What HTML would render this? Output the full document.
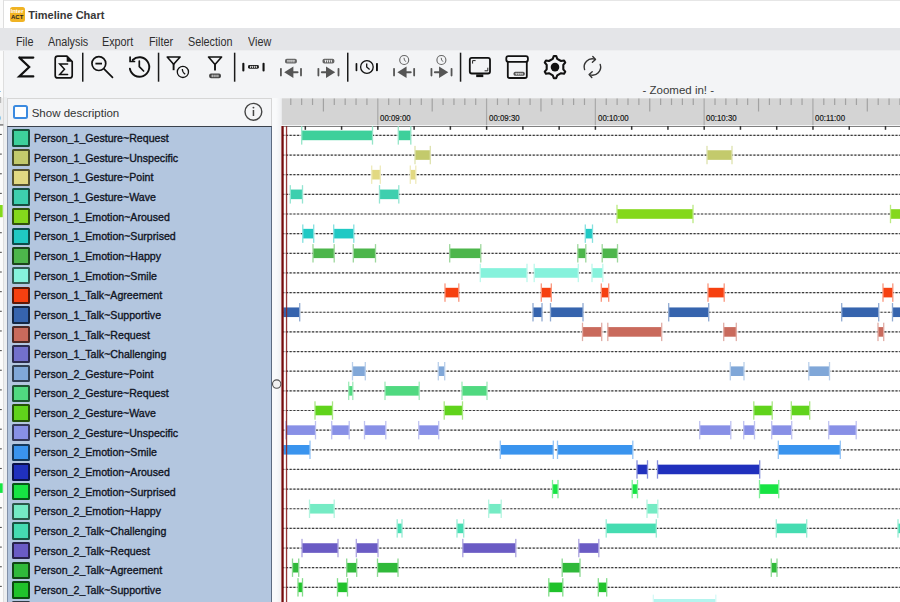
<!DOCTYPE html>
<html><head><meta charset="utf-8"><style>
html,body{margin:0;padding:0;}
body{width:900px;height:602px;overflow:hidden;position:relative;background:#f3f4f6;font-family:"Liberation Sans",sans-serif;}
.abs{position:absolute;}
.sw{position:absolute;left:11.5px;width:14px;height:13.4px;border:2px solid #333;border-radius:1.5px;}
.lb{position:absolute;left:34.3px;font-size:11.5px;line-height:14px;color:#10141f;-webkit-text-stroke:0.35px #10141f;white-space:nowrap;transform:scaleX(0.922);transform-origin:0 0;}
.rt{position:absolute;top:112.5px;font-size:9px;line-height:10px;color:#111;-webkit-text-stroke:0.15px #111;white-space:nowrap;transform:scaleX(0.875);transform-origin:0 0;}
.mi{position:absolute;top:34.7px;font-size:12px;line-height:14px;color:#2e2e2e;white-space:nowrap;transform:scaleX(0.9);transform-origin:0 0;}
</style></head><body>
<div class="abs" style="left:0;top:0;width:4px;height:602px;background:#fbfbfb"></div>
<div class="abs" style="left:3.3px;top:0;width:1px;height:602px;background:#dedede"></div>
<div class="abs" style="left:4.3px;top:97px;width:3px;height:505px;background:#eceef0"></div>
<div class="abs" style="left:4.3px;top:0;width:896px;height:28px;background:#ffffff"></div>
<div class="abs" style="left:4.3px;top:0;width:896px;height:1px;background:#e6e6e6"></div>
<div class="abs" style="left:4.3px;top:27.5px;width:896px;height:1.2px;background:#d5d7db"></div>
<div class="abs" style="left:0;top:28px;width:900px;height:22px;background:#e4e5e8"></div>
<div class="abs" style="left:0;top:49.6px;width:900px;height:1.3px;background:#eeeff1"></div>
<div class="abs" style="left:10px;top:7.3px;width:15.3px;height:14.3px;background:#f0b323;border-radius:2.5px;overflow:hidden">
  <div class="abs" style="left:0.5px;top:0.5px;font-size:6px;line-height:6px;font-weight:700;color:#fff">Inter</div>
  <div class="abs" style="left:1px;top:7px;font-size:6px;line-height:6px;font-weight:700;color:#222">ACT</div>
</div>
<div class="abs" style="left:28.2px;top:8.6px;font-size:11px;line-height:12px;font-weight:700;color:#383838;white-space:nowrap">Timeline Chart</div>
<div class="mi" style="left:16px">File</div>
<div class="mi" style="left:47.7px">Analysis</div>
<div class="mi" style="left:102px">Export</div>
<div class="mi" style="left:149px">Filter</div>
<div class="mi" style="left:188.3px">Selection</div>
<div class="mi" style="left:247.7px">View</div>
<!-- left panel header -->
<div class="abs" style="left:7.3px;top:98.3px;width:263px;height:27px;background:#f4f5f7;border:1px solid #d6d6d6;border-bottom:none"></div>
<div class="abs" style="left:13.3px;top:104.6px;width:10.6px;height:10.6px;border:2px solid #3b8ae0;border-radius:2.5px;background:#fff"></div>
<div class="abs" style="left:31.7px;top:105.5px;font-size:11.5px;line-height:14px;color:#333;white-space:nowrap">Show description</div>
<!-- list -->
<div class="abs" style="left:7.3px;top:125.5px;width:263px;height:480px;background:#b3c6df;border-left:1.2px solid #8190a8;border-right:1px solid #5d6b80;border-top:1.2px solid #3a414c"></div>
<div class="sw" style="top:129.30px;background:#3ed09b;border-color:#184f3b"></div><div class="lb" style="top:131.00px">Person_1_Gesture~Request</div><div class="sw" style="top:148.95px;background:#c3ca6c;border-color:#4a4d29"></div><div class="lb" style="top:150.65px">Person_1_Gesture~Unspecific</div><div class="sw" style="top:168.60px;background:#e2d982;border-color:#565231"></div><div class="lb" style="top:170.30px">Person_1_Gesture~Point</div><div class="sw" style="top:188.25px;background:#3dcfae;border-color:#174f42"></div><div class="lb" style="top:189.95px">Person_1_Gesture~Wave</div><div class="sw" style="top:207.90px;background:#84d81c;border-color:#32520b"></div><div class="lb" style="top:209.60px">Person_1_Emotion~Aroused</div><div class="sw" style="top:227.55px;background:#20c9c4;border-color:#0c4c4a"></div><div class="lb" style="top:229.25px">Person_1_Emotion~Surprised</div><div class="sw" style="top:247.20px;background:#4db64b;border-color:#1d451c"></div><div class="lb" style="top:248.90px">Person_1_Emotion~Happy</div><div class="sw" style="top:266.85px;background:#86f2dc;border-color:#335c54"></div><div class="lb" style="top:268.55px">Person_1_Emotion~Smile</div><div class="sw" style="top:286.50px;background:#f64010;border-color:#5d1806"></div><div class="lb" style="top:288.20px">Person_1_Talk~Agreement</div><div class="sw" style="top:306.15px;background:#3664ae;border-color:#152642"></div><div class="lb" style="top:307.85px">Person_1_Talk~Supportive</div><div class="sw" style="top:325.80px;background:#c96a5c;border-color:#4c2823"></div><div class="lb" style="top:327.50px">Person_1_Talk~Request</div><div class="sw" style="top:345.45px;background:#7370cc;border-color:#2c2b4e"></div><div class="lb" style="top:347.15px">Person_1_Talk~Challenging</div><div class="sw" style="top:365.10px;background:#80a7d8;border-color:#313f52"></div><div class="lb" style="top:366.80px">Person_2_Gesture~Point</div><div class="sw" style="top:384.75px;background:#50d980;border-color:#1e5231"></div><div class="lb" style="top:386.45px">Person_2_Gesture~Request</div><div class="sw" style="top:404.40px;background:#60d31b;border-color:#24500a"></div><div class="lb" style="top:406.10px">Person_2_Gesture~Wave</div><div class="sw" style="top:424.05px;background:#8890e6;border-color:#343757"></div><div class="lb" style="top:425.75px">Person_2_Gesture~Unspecific</div><div class="sw" style="top:443.70px;background:#3a94ee;border-color:#16385a"></div><div class="lb" style="top:445.40px">Person_2_Emotion~Smile</div><div class="sw" style="top:463.35px;background:#2030bd;border-color:#0c1248"></div><div class="lb" style="top:465.05px">Person_2_Emotion~Aroused</div><div class="sw" style="top:483.00px;background:#17e443;border-color:#095719"></div><div class="lb" style="top:484.70px">Person_2_Emotion~Surprised</div><div class="sw" style="top:502.65px;background:#75ebc4;border-color:#2c594a"></div><div class="lb" style="top:504.35px">Person_2_Emotion~Happy</div><div class="sw" style="top:522.30px;background:#45dcb1;border-color:#1a5443"></div><div class="lb" style="top:524.00px">Person_2_Talk~Challenging</div><div class="sw" style="top:541.95px;background:#6a5bc4;border-color:#28234a"></div><div class="lb" style="top:543.65px">Person_2_Talk~Request</div><div class="sw" style="top:561.60px;background:#30b93a;border-color:#124616"></div><div class="lb" style="top:563.30px">Person_2_Talk~Agreement</div><div class="sw" style="top:581.25px;background:#20c22b;border-color:#0c4a10"></div><div class="lb" style="top:582.95px">Person_2_Talk~Supportive</div><div class="sw" style="top:600.90px;background:#5f7f95;border-color:#2f3a44"></div>
<div class="abs" style="left:272.3px;top:98px;width:9px;height:504px;background:linear-gradient(90deg,#f9fafb 0%,#f9fafb 45%,#eff0f2 100%)"></div>
<svg class="abs" style="left:0;top:0" width="900" height="602" viewBox="0 0 900 602">
<defs><clipPath id="chartclip"><rect x="283.3" y="126" width="620" height="480"/></clipPath></defs>
<rect x="281.7" y="98.3" width="620" height="27" fill="#d4d4d4"/><rect x="290.18" y="98.5" width="1.2" height="6.5" fill="#a2a2a2"/><rect x="301.05" y="98.5" width="1.2" height="6.5" fill="#a2a2a2"/><rect x="311.93" y="98.5" width="1.2" height="6.5" fill="#a2a2a2"/><rect x="322.81" y="98.5" width="1.2" height="13" fill="#a2a2a2"/><rect x="333.69" y="98.5" width="1.2" height="6.5" fill="#a2a2a2"/><rect x="344.57" y="98.5" width="1.2" height="6.5" fill="#a2a2a2"/><rect x="355.44" y="98.5" width="1.2" height="6.5" fill="#a2a2a2"/><rect x="366.32" y="98.5" width="1.2" height="6.5" fill="#a2a2a2"/><rect x="377.20" y="98.5" width="1.2" height="27" fill="#a9a9a9"/><rect x="388.08" y="98.5" width="1.2" height="6.5" fill="#a2a2a2"/><rect x="398.96" y="98.5" width="1.2" height="6.5" fill="#a2a2a2"/><rect x="409.83" y="98.5" width="1.2" height="6.5" fill="#a2a2a2"/><rect x="420.71" y="98.5" width="1.2" height="6.5" fill="#a2a2a2"/><rect x="431.59" y="98.5" width="1.2" height="13" fill="#a2a2a2"/><rect x="442.47" y="98.5" width="1.2" height="6.5" fill="#a2a2a2"/><rect x="453.35" y="98.5" width="1.2" height="6.5" fill="#a2a2a2"/><rect x="464.22" y="98.5" width="1.2" height="6.5" fill="#a2a2a2"/><rect x="475.10" y="98.5" width="1.2" height="6.5" fill="#a2a2a2"/><rect x="485.98" y="98.5" width="1.2" height="27" fill="#a9a9a9"/><rect x="496.86" y="98.5" width="1.2" height="6.5" fill="#a2a2a2"/><rect x="507.74" y="98.5" width="1.2" height="6.5" fill="#a2a2a2"/><rect x="518.61" y="98.5" width="1.2" height="6.5" fill="#a2a2a2"/><rect x="529.49" y="98.5" width="1.2" height="6.5" fill="#a2a2a2"/><rect x="540.37" y="98.5" width="1.2" height="13" fill="#a2a2a2"/><rect x="551.25" y="98.5" width="1.2" height="6.5" fill="#a2a2a2"/><rect x="562.13" y="98.5" width="1.2" height="6.5" fill="#a2a2a2"/><rect x="573.00" y="98.5" width="1.2" height="6.5" fill="#a2a2a2"/><rect x="583.88" y="98.5" width="1.2" height="6.5" fill="#a2a2a2"/><rect x="594.76" y="98.5" width="1.2" height="27" fill="#a9a9a9"/><rect x="605.64" y="98.5" width="1.2" height="6.5" fill="#a2a2a2"/><rect x="616.52" y="98.5" width="1.2" height="6.5" fill="#a2a2a2"/><rect x="627.39" y="98.5" width="1.2" height="6.5" fill="#a2a2a2"/><rect x="638.27" y="98.5" width="1.2" height="6.5" fill="#a2a2a2"/><rect x="649.15" y="98.5" width="1.2" height="13" fill="#a2a2a2"/><rect x="660.03" y="98.5" width="1.2" height="6.5" fill="#a2a2a2"/><rect x="670.91" y="98.5" width="1.2" height="6.5" fill="#a2a2a2"/><rect x="681.78" y="98.5" width="1.2" height="6.5" fill="#a2a2a2"/><rect x="692.66" y="98.5" width="1.2" height="6.5" fill="#a2a2a2"/><rect x="703.54" y="98.5" width="1.2" height="27" fill="#a9a9a9"/><rect x="714.42" y="98.5" width="1.2" height="6.5" fill="#a2a2a2"/><rect x="725.30" y="98.5" width="1.2" height="6.5" fill="#a2a2a2"/><rect x="736.17" y="98.5" width="1.2" height="6.5" fill="#a2a2a2"/><rect x="747.05" y="98.5" width="1.2" height="6.5" fill="#a2a2a2"/><rect x="757.93" y="98.5" width="1.2" height="13" fill="#a2a2a2"/><rect x="768.81" y="98.5" width="1.2" height="6.5" fill="#a2a2a2"/><rect x="779.69" y="98.5" width="1.2" height="6.5" fill="#a2a2a2"/><rect x="790.56" y="98.5" width="1.2" height="6.5" fill="#a2a2a2"/><rect x="801.44" y="98.5" width="1.2" height="6.5" fill="#a2a2a2"/><rect x="812.32" y="98.5" width="1.2" height="27" fill="#a9a9a9"/><rect x="823.20" y="98.5" width="1.2" height="6.5" fill="#a2a2a2"/><rect x="834.08" y="98.5" width="1.2" height="6.5" fill="#a2a2a2"/><rect x="844.95" y="98.5" width="1.2" height="6.5" fill="#a2a2a2"/><rect x="855.83" y="98.5" width="1.2" height="6.5" fill="#a2a2a2"/><rect x="866.71" y="98.5" width="1.2" height="13" fill="#a2a2a2"/><rect x="877.59" y="98.5" width="1.2" height="6.5" fill="#a2a2a2"/><rect x="888.47" y="98.5" width="1.2" height="6.5" fill="#a2a2a2"/><rect x="899.34" y="98.5" width="1.2" height="6.5" fill="#a2a2a2"/><rect x="281.5" y="125.5" width="620" height="480" fill="#ffffff"/><g clip-path="url(#chartclip)"><rect x="281.7" y="125" width="620" height="1.7" fill="#4a4a4a"/><rect x="304.58" y="125.5" width="1.5" height="4.3" fill="#333"/><rect x="340.84" y="125.5" width="1.5" height="4.3" fill="#333"/><rect x="377.10" y="125.5" width="1.5" height="4.3" fill="#333"/><rect x="413.36" y="125.5" width="1.5" height="4.3" fill="#333"/><rect x="449.62" y="125.5" width="1.5" height="4.3" fill="#333"/><rect x="485.88" y="125.5" width="1.5" height="4.3" fill="#333"/><rect x="522.14" y="125.5" width="1.5" height="4.3" fill="#333"/><rect x="558.40" y="125.5" width="1.5" height="4.3" fill="#333"/><rect x="594.66" y="125.5" width="1.5" height="4.3" fill="#333"/><rect x="630.92" y="125.5" width="1.5" height="4.3" fill="#333"/><rect x="667.18" y="125.5" width="1.5" height="4.3" fill="#333"/><rect x="703.44" y="125.5" width="1.5" height="4.3" fill="#333"/><rect x="739.70" y="125.5" width="1.5" height="4.3" fill="#333"/><rect x="775.96" y="125.5" width="1.5" height="4.3" fill="#333"/><rect x="812.22" y="125.5" width="1.5" height="4.3" fill="#333"/><rect x="848.48" y="125.5" width="1.5" height="4.3" fill="#333"/><rect x="884.74" y="125.5" width="1.5" height="4.3" fill="#333"/><line x1="283" y1="135.40" x2="902" y2="135.40" stroke="#d4d4d4" stroke-width="1.1"/><line x1="282.12" y1="135.40" x2="902" y2="135.40" stroke="#3a3a3a" stroke-width="1.2" stroke-dasharray="2.1 1.64"/><line x1="283" y1="155.05" x2="902" y2="155.05" stroke="#d4d4d4" stroke-width="1.1"/><line x1="282.12" y1="155.05" x2="902" y2="155.05" stroke="#3a3a3a" stroke-width="1.2" stroke-dasharray="2.1 1.64"/><line x1="283" y1="174.70" x2="902" y2="174.70" stroke="#d4d4d4" stroke-width="1.1"/><line x1="282.12" y1="174.70" x2="902" y2="174.70" stroke="#3a3a3a" stroke-width="1.2" stroke-dasharray="2.1 1.64"/><line x1="283" y1="194.35" x2="902" y2="194.35" stroke="#d4d4d4" stroke-width="1.1"/><line x1="282.12" y1="194.35" x2="902" y2="194.35" stroke="#3a3a3a" stroke-width="1.2" stroke-dasharray="2.1 1.64"/><line x1="283" y1="214.00" x2="902" y2="214.00" stroke="#d4d4d4" stroke-width="1.1"/><line x1="282.12" y1="214.00" x2="902" y2="214.00" stroke="#3a3a3a" stroke-width="1.2" stroke-dasharray="2.1 1.64"/><line x1="283" y1="233.65" x2="902" y2="233.65" stroke="#d4d4d4" stroke-width="1.1"/><line x1="282.12" y1="233.65" x2="902" y2="233.65" stroke="#3a3a3a" stroke-width="1.2" stroke-dasharray="2.1 1.64"/><line x1="283" y1="253.30" x2="902" y2="253.30" stroke="#d4d4d4" stroke-width="1.1"/><line x1="282.12" y1="253.30" x2="902" y2="253.30" stroke="#3a3a3a" stroke-width="1.2" stroke-dasharray="2.1 1.64"/><line x1="283" y1="272.95" x2="902" y2="272.95" stroke="#d4d4d4" stroke-width="1.1"/><line x1="282.12" y1="272.95" x2="902" y2="272.95" stroke="#3a3a3a" stroke-width="1.2" stroke-dasharray="2.1 1.64"/><line x1="283" y1="292.60" x2="902" y2="292.60" stroke="#d4d4d4" stroke-width="1.1"/><line x1="282.12" y1="292.60" x2="902" y2="292.60" stroke="#3a3a3a" stroke-width="1.2" stroke-dasharray="2.1 1.64"/><line x1="283" y1="312.25" x2="902" y2="312.25" stroke="#d4d4d4" stroke-width="1.1"/><line x1="282.12" y1="312.25" x2="902" y2="312.25" stroke="#3a3a3a" stroke-width="1.2" stroke-dasharray="2.1 1.64"/><line x1="283" y1="331.90" x2="902" y2="331.90" stroke="#d4d4d4" stroke-width="1.1"/><line x1="282.12" y1="331.90" x2="902" y2="331.90" stroke="#3a3a3a" stroke-width="1.2" stroke-dasharray="2.1 1.64"/><line x1="283" y1="351.55" x2="902" y2="351.55" stroke="#d4d4d4" stroke-width="1.1"/><line x1="282.12" y1="351.55" x2="902" y2="351.55" stroke="#3a3a3a" stroke-width="1.2" stroke-dasharray="2.1 1.64"/><line x1="283" y1="371.20" x2="902" y2="371.20" stroke="#d4d4d4" stroke-width="1.1"/><line x1="282.12" y1="371.20" x2="902" y2="371.20" stroke="#3a3a3a" stroke-width="1.2" stroke-dasharray="2.1 1.64"/><line x1="283" y1="390.85" x2="902" y2="390.85" stroke="#d4d4d4" stroke-width="1.1"/><line x1="282.12" y1="390.85" x2="902" y2="390.85" stroke="#3a3a3a" stroke-width="1.2" stroke-dasharray="2.1 1.64"/><line x1="283" y1="410.50" x2="902" y2="410.50" stroke="#d4d4d4" stroke-width="1.1"/><line x1="282.12" y1="410.50" x2="902" y2="410.50" stroke="#3a3a3a" stroke-width="1.2" stroke-dasharray="2.1 1.64"/><line x1="283" y1="430.15" x2="902" y2="430.15" stroke="#d4d4d4" stroke-width="1.1"/><line x1="282.12" y1="430.15" x2="902" y2="430.15" stroke="#3a3a3a" stroke-width="1.2" stroke-dasharray="2.1 1.64"/><line x1="283" y1="449.80" x2="902" y2="449.80" stroke="#d4d4d4" stroke-width="1.1"/><line x1="282.12" y1="449.80" x2="902" y2="449.80" stroke="#3a3a3a" stroke-width="1.2" stroke-dasharray="2.1 1.64"/><line x1="283" y1="469.45" x2="902" y2="469.45" stroke="#d4d4d4" stroke-width="1.1"/><line x1="282.12" y1="469.45" x2="902" y2="469.45" stroke="#3a3a3a" stroke-width="1.2" stroke-dasharray="2.1 1.64"/><line x1="283" y1="489.10" x2="902" y2="489.10" stroke="#d4d4d4" stroke-width="1.1"/><line x1="282.12" y1="489.10" x2="902" y2="489.10" stroke="#3a3a3a" stroke-width="1.2" stroke-dasharray="2.1 1.64"/><line x1="283" y1="508.75" x2="902" y2="508.75" stroke="#d4d4d4" stroke-width="1.1"/><line x1="282.12" y1="508.75" x2="902" y2="508.75" stroke="#3a3a3a" stroke-width="1.2" stroke-dasharray="2.1 1.64"/><line x1="283" y1="528.40" x2="902" y2="528.40" stroke="#d4d4d4" stroke-width="1.1"/><line x1="282.12" y1="528.40" x2="902" y2="528.40" stroke="#3a3a3a" stroke-width="1.2" stroke-dasharray="2.1 1.64"/><line x1="283" y1="548.05" x2="902" y2="548.05" stroke="#d4d4d4" stroke-width="1.1"/><line x1="282.12" y1="548.05" x2="902" y2="548.05" stroke="#3a3a3a" stroke-width="1.2" stroke-dasharray="2.1 1.64"/><line x1="283" y1="567.70" x2="902" y2="567.70" stroke="#d4d4d4" stroke-width="1.1"/><line x1="282.12" y1="567.70" x2="902" y2="567.70" stroke="#3a3a3a" stroke-width="1.2" stroke-dasharray="2.1 1.64"/><line x1="283" y1="587.35" x2="902" y2="587.35" stroke="#d4d4d4" stroke-width="1.1"/><line x1="282.12" y1="587.35" x2="902" y2="587.35" stroke="#3a3a3a" stroke-width="1.2" stroke-dasharray="2.1 1.64"/><rect x="301.70" y="130.60" width="70.80" height="9.6" fill="#3ed09b"/><rect x="301.05" y="126.20" width="1.3" height="18.4" fill="#95e5c8"/><rect x="371.85" y="126.20" width="1.3" height="18.4" fill="#95e5c8"/><rect x="398.30" y="130.60" width="12.50" height="9.6" fill="#3ed09b"/><rect x="397.65" y="126.20" width="1.3" height="18.4" fill="#95e5c8"/><rect x="410.15" y="126.20" width="1.3" height="18.4" fill="#95e5c8"/><rect x="415.00" y="150.25" width="15.30" height="9.6" fill="#c3ca6c"/><rect x="414.35" y="145.85" width="1.3" height="18.4" fill="#dee2ae"/><rect x="429.65" y="145.85" width="1.3" height="18.4" fill="#dee2ae"/><rect x="707.00" y="150.25" width="25.00" height="9.6" fill="#c3ca6c"/><rect x="706.35" y="145.85" width="1.3" height="18.4" fill="#dee2ae"/><rect x="731.35" y="145.85" width="1.3" height="18.4" fill="#dee2ae"/><rect x="371.70" y="169.90" width="8.60" height="9.6" fill="#e2d982"/><rect x="371.05" y="165.50" width="1.3" height="18.4" fill="#efeaba"/><rect x="379.65" y="165.50" width="1.3" height="18.4" fill="#efeaba"/><rect x="410.30" y="169.90" width="5.50" height="9.6" fill="#e2d982"/><rect x="409.65" y="165.50" width="1.3" height="18.4" fill="#efeaba"/><rect x="415.15" y="165.50" width="1.3" height="18.4" fill="#efeaba"/><rect x="290.30" y="189.55" width="12.20" height="9.6" fill="#3dcfae"/><rect x="289.65" y="185.15" width="1.3" height="18.4" fill="#94e5d2"/><rect x="301.85" y="185.15" width="1.3" height="18.4" fill="#94e5d2"/><rect x="379.50" y="189.55" width="19.30" height="9.6" fill="#3dcfae"/><rect x="378.85" y="185.15" width="1.3" height="18.4" fill="#94e5d2"/><rect x="398.15" y="185.15" width="1.3" height="18.4" fill="#94e5d2"/><rect x="617.00" y="209.20" width="76.00" height="9.6" fill="#84d81c"/><rect x="616.35" y="204.80" width="1.3" height="18.4" fill="#bbea82"/><rect x="692.35" y="204.80" width="1.3" height="18.4" fill="#bbea82"/><rect x="890.50" y="209.20" width="21.50" height="9.6" fill="#84d81c"/><rect x="889.85" y="204.80" width="1.3" height="18.4" fill="#bbea82"/><rect x="911.35" y="204.80" width="1.3" height="18.4" fill="#bbea82"/><rect x="302.80" y="228.85" width="10.90" height="9.6" fill="#20c9c4"/><rect x="302.15" y="224.45" width="1.3" height="18.4" fill="#84e1df"/><rect x="313.05" y="224.45" width="1.3" height="18.4" fill="#84e1df"/><rect x="333.70" y="228.85" width="20.10" height="9.6" fill="#20c9c4"/><rect x="333.05" y="224.45" width="1.3" height="18.4" fill="#84e1df"/><rect x="353.15" y="224.45" width="1.3" height="18.4" fill="#84e1df"/><rect x="585.30" y="228.85" width="7.20" height="9.6" fill="#20c9c4"/><rect x="584.65" y="224.45" width="1.3" height="18.4" fill="#84e1df"/><rect x="591.85" y="224.45" width="1.3" height="18.4" fill="#84e1df"/><rect x="313.00" y="248.50" width="21.20" height="9.6" fill="#4db64b"/><rect x="312.35" y="244.10" width="1.3" height="18.4" fill="#9dd79c"/><rect x="333.55" y="244.10" width="1.3" height="18.4" fill="#9dd79c"/><rect x="353.30" y="248.50" width="22.20" height="9.6" fill="#4db64b"/><rect x="352.65" y="244.10" width="1.3" height="18.4" fill="#9dd79c"/><rect x="374.85" y="244.10" width="1.3" height="18.4" fill="#9dd79c"/><rect x="449.70" y="248.50" width="31.10" height="9.6" fill="#4db64b"/><rect x="449.05" y="244.10" width="1.3" height="18.4" fill="#9dd79c"/><rect x="480.15" y="244.10" width="1.3" height="18.4" fill="#9dd79c"/><rect x="577.80" y="248.50" width="8.00" height="9.6" fill="#4db64b"/><rect x="577.15" y="244.10" width="1.3" height="18.4" fill="#9dd79c"/><rect x="585.15" y="244.10" width="1.3" height="18.4" fill="#9dd79c"/><rect x="602.20" y="248.50" width="15.30" height="9.6" fill="#4db64b"/><rect x="601.55" y="244.10" width="1.3" height="18.4" fill="#9dd79c"/><rect x="616.85" y="244.10" width="1.3" height="18.4" fill="#9dd79c"/><rect x="480.30" y="268.15" width="46.70" height="9.6" fill="#86f2dc"/><rect x="479.65" y="263.75" width="1.3" height="18.4" fill="#bcf8ec"/><rect x="526.35" y="263.75" width="1.3" height="18.4" fill="#bcf8ec"/><rect x="534.20" y="268.15" width="44.10" height="9.6" fill="#86f2dc"/><rect x="533.55" y="263.75" width="1.3" height="18.4" fill="#bcf8ec"/><rect x="577.65" y="263.75" width="1.3" height="18.4" fill="#bcf8ec"/><rect x="592.00" y="268.15" width="10.80" height="9.6" fill="#86f2dc"/><rect x="591.35" y="263.75" width="1.3" height="18.4" fill="#bcf8ec"/><rect x="602.15" y="263.75" width="1.3" height="18.4" fill="#bcf8ec"/><rect x="445.00" y="287.80" width="13.80" height="9.6" fill="#f64010"/><rect x="444.35" y="283.40" width="1.3" height="18.4" fill="#fa967c"/><rect x="458.15" y="283.40" width="1.3" height="18.4" fill="#fa967c"/><rect x="541.30" y="287.80" width="10.00" height="9.6" fill="#f64010"/><rect x="540.65" y="283.40" width="1.3" height="18.4" fill="#fa967c"/><rect x="550.65" y="283.40" width="1.3" height="18.4" fill="#fa967c"/><rect x="601.30" y="287.80" width="7.40" height="9.6" fill="#f64010"/><rect x="600.65" y="283.40" width="1.3" height="18.4" fill="#fa967c"/><rect x="608.05" y="283.40" width="1.3" height="18.4" fill="#fa967c"/><rect x="708.00" y="287.80" width="16.20" height="9.6" fill="#f64010"/><rect x="707.35" y="283.40" width="1.3" height="18.4" fill="#fa967c"/><rect x="723.55" y="283.40" width="1.3" height="18.4" fill="#fa967c"/><rect x="883.00" y="287.80" width="9.80" height="9.6" fill="#f64010"/><rect x="882.35" y="283.40" width="1.3" height="18.4" fill="#fa967c"/><rect x="892.15" y="283.40" width="1.3" height="18.4" fill="#fa967c"/><rect x="270.00" y="307.45" width="29.70" height="9.6" fill="#3664ae"/><rect x="269.35" y="303.05" width="1.3" height="18.4" fill="#90aad2"/><rect x="299.05" y="303.05" width="1.3" height="18.4" fill="#90aad2"/><rect x="533.00" y="307.45" width="9.00" height="9.6" fill="#3664ae"/><rect x="532.35" y="303.05" width="1.3" height="18.4" fill="#90aad2"/><rect x="541.35" y="303.05" width="1.3" height="18.4" fill="#90aad2"/><rect x="550.50" y="307.45" width="32.50" height="9.6" fill="#3664ae"/><rect x="549.85" y="303.05" width="1.3" height="18.4" fill="#90aad2"/><rect x="582.35" y="303.05" width="1.3" height="18.4" fill="#90aad2"/><rect x="668.70" y="307.45" width="40.00" height="9.6" fill="#3664ae"/><rect x="668.05" y="303.05" width="1.3" height="18.4" fill="#90aad2"/><rect x="708.05" y="303.05" width="1.3" height="18.4" fill="#90aad2"/><rect x="841.70" y="307.45" width="37.00" height="9.6" fill="#3664ae"/><rect x="841.05" y="303.05" width="1.3" height="18.4" fill="#90aad2"/><rect x="878.05" y="303.05" width="1.3" height="18.4" fill="#90aad2"/><rect x="892.50" y="307.45" width="19.50" height="9.6" fill="#3664ae"/><rect x="891.85" y="303.05" width="1.3" height="18.4" fill="#90aad2"/><rect x="911.35" y="303.05" width="1.3" height="18.4" fill="#90aad2"/><rect x="582.50" y="327.10" width="19.20" height="9.6" fill="#c96a5c"/><rect x="581.85" y="322.70" width="1.3" height="18.4" fill="#e1ada5"/><rect x="601.05" y="322.70" width="1.3" height="18.4" fill="#e1ada5"/><rect x="607.80" y="327.10" width="53.90" height="9.6" fill="#c96a5c"/><rect x="607.15" y="322.70" width="1.3" height="18.4" fill="#e1ada5"/><rect x="661.05" y="322.70" width="1.3" height="18.4" fill="#e1ada5"/><rect x="723.70" y="327.10" width="12.60" height="9.6" fill="#c96a5c"/><rect x="723.05" y="322.70" width="1.3" height="18.4" fill="#e1ada5"/><rect x="735.65" y="322.70" width="1.3" height="18.4" fill="#e1ada5"/><rect x="878.00" y="327.10" width="5.70" height="9.6" fill="#c96a5c"/><rect x="877.35" y="322.70" width="1.3" height="18.4" fill="#e1ada5"/><rect x="883.05" y="322.70" width="1.3" height="18.4" fill="#e1ada5"/><rect x="352.50" y="366.40" width="12.80" height="9.6" fill="#80a7d8"/><rect x="351.85" y="362.00" width="1.3" height="18.4" fill="#b9cfea"/><rect x="364.65" y="362.00" width="1.3" height="18.4" fill="#b9cfea"/><rect x="438.30" y="366.40" width="6.40" height="9.6" fill="#80a7d8"/><rect x="437.65" y="362.00" width="1.3" height="18.4" fill="#b9cfea"/><rect x="444.05" y="362.00" width="1.3" height="18.4" fill="#b9cfea"/><rect x="730.30" y="366.40" width="13.70" height="9.6" fill="#80a7d8"/><rect x="729.65" y="362.00" width="1.3" height="18.4" fill="#b9cfea"/><rect x="743.35" y="362.00" width="1.3" height="18.4" fill="#b9cfea"/><rect x="808.80" y="366.40" width="20.70" height="9.6" fill="#80a7d8"/><rect x="808.15" y="362.00" width="1.3" height="18.4" fill="#b9cfea"/><rect x="828.85" y="362.00" width="1.3" height="18.4" fill="#b9cfea"/><rect x="348.70" y="386.05" width="4.10" height="9.6" fill="#50d980"/><rect x="348.05" y="381.65" width="1.3" height="18.4" fill="#9feab9"/><rect x="352.15" y="381.65" width="1.3" height="18.4" fill="#9feab9"/><rect x="385.00" y="386.05" width="34.20" height="9.6" fill="#50d980"/><rect x="384.35" y="381.65" width="1.3" height="18.4" fill="#9feab9"/><rect x="418.55" y="381.65" width="1.3" height="18.4" fill="#9feab9"/><rect x="462.00" y="386.05" width="25.00" height="9.6" fill="#50d980"/><rect x="461.35" y="381.65" width="1.3" height="18.4" fill="#9feab9"/><rect x="486.35" y="381.65" width="1.3" height="18.4" fill="#9feab9"/><rect x="315.00" y="405.70" width="17.50" height="9.6" fill="#60d31b"/><rect x="314.35" y="401.30" width="1.3" height="18.4" fill="#a8e782"/><rect x="331.85" y="401.30" width="1.3" height="18.4" fill="#a8e782"/><rect x="444.20" y="405.70" width="18.30" height="9.6" fill="#60d31b"/><rect x="443.55" y="401.30" width="1.3" height="18.4" fill="#a8e782"/><rect x="461.85" y="401.30" width="1.3" height="18.4" fill="#a8e782"/><rect x="753.80" y="405.70" width="18.40" height="9.6" fill="#60d31b"/><rect x="753.15" y="401.30" width="1.3" height="18.4" fill="#a8e782"/><rect x="771.55" y="401.30" width="1.3" height="18.4" fill="#a8e782"/><rect x="791.30" y="405.70" width="18.40" height="9.6" fill="#60d31b"/><rect x="790.65" y="401.30" width="1.3" height="18.4" fill="#a8e782"/><rect x="809.05" y="401.30" width="1.3" height="18.4" fill="#a8e782"/><rect x="285.80" y="425.35" width="29.70" height="9.6" fill="#8890e6"/><rect x="285.15" y="420.95" width="1.3" height="18.4" fill="#bec2f1"/><rect x="314.85" y="420.95" width="1.3" height="18.4" fill="#bec2f1"/><rect x="331.70" y="425.35" width="17.50" height="9.6" fill="#8890e6"/><rect x="331.05" y="420.95" width="1.3" height="18.4" fill="#bec2f1"/><rect x="348.55" y="420.95" width="1.3" height="18.4" fill="#bec2f1"/><rect x="364.50" y="425.35" width="21.30" height="9.6" fill="#8890e6"/><rect x="363.85" y="420.95" width="1.3" height="18.4" fill="#bec2f1"/><rect x="385.15" y="420.95" width="1.3" height="18.4" fill="#bec2f1"/><rect x="418.70" y="425.35" width="20.00" height="9.6" fill="#8890e6"/><rect x="418.05" y="420.95" width="1.3" height="18.4" fill="#bec2f1"/><rect x="438.05" y="420.95" width="1.3" height="18.4" fill="#bec2f1"/><rect x="699.70" y="425.35" width="31.10" height="9.6" fill="#8890e6"/><rect x="699.05" y="420.95" width="1.3" height="18.4" fill="#bec2f1"/><rect x="730.15" y="420.95" width="1.3" height="18.4" fill="#bec2f1"/><rect x="743.70" y="425.35" width="10.80" height="9.6" fill="#8890e6"/><rect x="743.05" y="420.95" width="1.3" height="18.4" fill="#bec2f1"/><rect x="753.85" y="420.95" width="1.3" height="18.4" fill="#bec2f1"/><rect x="771.70" y="425.35" width="20.00" height="9.6" fill="#8890e6"/><rect x="771.05" y="420.95" width="1.3" height="18.4" fill="#bec2f1"/><rect x="791.05" y="420.95" width="1.3" height="18.4" fill="#bec2f1"/><rect x="828.70" y="425.35" width="27.50" height="9.6" fill="#8890e6"/><rect x="828.05" y="420.95" width="1.3" height="18.4" fill="#bec2f1"/><rect x="855.55" y="420.95" width="1.3" height="18.4" fill="#bec2f1"/><rect x="270.00" y="445.00" width="40.00" height="9.6" fill="#3a94ee"/><rect x="269.35" y="440.60" width="1.3" height="18.4" fill="#93c4f6"/><rect x="309.35" y="440.60" width="1.3" height="18.4" fill="#93c4f6"/><rect x="500.30" y="445.00" width="53.00" height="9.6" fill="#3a94ee"/><rect x="499.65" y="440.60" width="1.3" height="18.4" fill="#93c4f6"/><rect x="552.65" y="440.60" width="1.3" height="18.4" fill="#93c4f6"/><rect x="557.50" y="445.00" width="75.30" height="9.6" fill="#3a94ee"/><rect x="556.85" y="440.60" width="1.3" height="18.4" fill="#93c4f6"/><rect x="632.15" y="440.60" width="1.3" height="18.4" fill="#93c4f6"/><rect x="778.30" y="445.00" width="62.00" height="9.6" fill="#3a94ee"/><rect x="777.65" y="440.60" width="1.3" height="18.4" fill="#93c4f6"/><rect x="839.65" y="440.60" width="1.3" height="18.4" fill="#93c4f6"/><rect x="637.00" y="464.65" width="10.50" height="9.6" fill="#2030bd"/><rect x="636.35" y="460.25" width="1.3" height="18.4" fill="#848ddb"/><rect x="646.85" y="460.25" width="1.3" height="18.4" fill="#848ddb"/><rect x="657.50" y="464.65" width="102.20" height="9.6" fill="#2030bd"/><rect x="656.85" y="460.25" width="1.3" height="18.4" fill="#848ddb"/><rect x="759.05" y="460.25" width="1.3" height="18.4" fill="#848ddb"/><rect x="552.50" y="484.30" width="5.50" height="9.6" fill="#17e443"/><rect x="551.85" y="479.90" width="1.3" height="18.4" fill="#7ff098"/><rect x="557.35" y="479.90" width="1.3" height="18.4" fill="#7ff098"/><rect x="632.20" y="484.30" width="5.30" height="9.6" fill="#17e443"/><rect x="631.55" y="479.90" width="1.3" height="18.4" fill="#7ff098"/><rect x="636.85" y="479.90" width="1.3" height="18.4" fill="#7ff098"/><rect x="759.50" y="484.30" width="19.20" height="9.6" fill="#17e443"/><rect x="758.85" y="479.90" width="1.3" height="18.4" fill="#7ff098"/><rect x="778.05" y="479.90" width="1.3" height="18.4" fill="#7ff098"/><rect x="309.50" y="503.95" width="24.70" height="9.6" fill="#75ebc4"/><rect x="308.85" y="499.55" width="1.3" height="18.4" fill="#b3f4df"/><rect x="333.55" y="499.55" width="1.3" height="18.4" fill="#b3f4df"/><rect x="488.70" y="503.95" width="12.50" height="9.6" fill="#75ebc4"/><rect x="488.05" y="499.55" width="1.3" height="18.4" fill="#b3f4df"/><rect x="500.55" y="499.55" width="1.3" height="18.4" fill="#b3f4df"/><rect x="647.00" y="503.95" width="10.80" height="9.6" fill="#75ebc4"/><rect x="646.35" y="499.55" width="1.3" height="18.4" fill="#b3f4df"/><rect x="657.15" y="499.55" width="1.3" height="18.4" fill="#b3f4df"/><rect x="397.20" y="523.60" width="4.80" height="9.6" fill="#45dcb1"/><rect x="396.55" y="519.20" width="1.3" height="18.4" fill="#99ecd4"/><rect x="401.35" y="519.20" width="1.3" height="18.4" fill="#99ecd4"/><rect x="457.00" y="523.60" width="6.70" height="9.6" fill="#45dcb1"/><rect x="456.35" y="519.20" width="1.3" height="18.4" fill="#99ecd4"/><rect x="463.05" y="519.20" width="1.3" height="18.4" fill="#99ecd4"/><rect x="606.20" y="523.60" width="50.10" height="9.6" fill="#45dcb1"/><rect x="605.55" y="519.20" width="1.3" height="18.4" fill="#99ecd4"/><rect x="655.65" y="519.20" width="1.3" height="18.4" fill="#99ecd4"/><rect x="776.30" y="523.60" width="30.40" height="9.6" fill="#45dcb1"/><rect x="775.65" y="519.20" width="1.3" height="18.4" fill="#99ecd4"/><rect x="806.05" y="519.20" width="1.3" height="18.4" fill="#99ecd4"/><rect x="898.00" y="523.60" width="14.00" height="9.6" fill="#45dcb1"/><rect x="897.35" y="519.20" width="1.3" height="18.4" fill="#99ecd4"/><rect x="911.35" y="519.20" width="1.3" height="18.4" fill="#99ecd4"/><rect x="302.00" y="543.25" width="36.00" height="9.6" fill="#6a5bc4"/><rect x="301.35" y="538.85" width="1.3" height="18.4" fill="#ada5df"/><rect x="337.35" y="538.85" width="1.3" height="18.4" fill="#ada5df"/><rect x="356.30" y="543.25" width="21.70" height="9.6" fill="#6a5bc4"/><rect x="355.65" y="538.85" width="1.3" height="18.4" fill="#ada5df"/><rect x="377.35" y="538.85" width="1.3" height="18.4" fill="#ada5df"/><rect x="462.80" y="543.25" width="53.00" height="9.6" fill="#6a5bc4"/><rect x="462.15" y="538.85" width="1.3" height="18.4" fill="#ada5df"/><rect x="515.15" y="538.85" width="1.3" height="18.4" fill="#ada5df"/><rect x="578.80" y="543.25" width="20.00" height="9.6" fill="#6a5bc4"/><rect x="578.15" y="538.85" width="1.3" height="18.4" fill="#ada5df"/><rect x="598.15" y="538.85" width="1.3" height="18.4" fill="#ada5df"/><rect x="292.50" y="562.90" width="6.20" height="9.6" fill="#30b93a"/><rect x="291.85" y="558.50" width="1.3" height="18.4" fill="#8dd893"/><rect x="298.05" y="558.50" width="1.3" height="18.4" fill="#8dd893"/><rect x="346.70" y="562.90" width="10.00" height="9.6" fill="#30b93a"/><rect x="346.05" y="558.50" width="1.3" height="18.4" fill="#8dd893"/><rect x="356.05" y="558.50" width="1.3" height="18.4" fill="#8dd893"/><rect x="377.50" y="562.90" width="20.50" height="9.6" fill="#30b93a"/><rect x="376.85" y="558.50" width="1.3" height="18.4" fill="#8dd893"/><rect x="397.35" y="558.50" width="1.3" height="18.4" fill="#8dd893"/><rect x="562.20" y="562.90" width="17.80" height="9.6" fill="#30b93a"/><rect x="561.55" y="558.50" width="1.3" height="18.4" fill="#8dd893"/><rect x="579.35" y="558.50" width="1.3" height="18.4" fill="#8dd893"/><rect x="771.30" y="562.90" width="5.70" height="9.6" fill="#30b93a"/><rect x="770.65" y="558.50" width="1.3" height="18.4" fill="#8dd893"/><rect x="776.35" y="558.50" width="1.3" height="18.4" fill="#8dd893"/><rect x="298.00" y="582.55" width="4.50" height="9.6" fill="#20c22b"/><rect x="297.35" y="578.15" width="1.3" height="18.4" fill="#84dd8a"/><rect x="301.85" y="578.15" width="1.3" height="18.4" fill="#84dd8a"/><rect x="337.50" y="582.55" width="10.00" height="9.6" fill="#20c22b"/><rect x="336.85" y="578.15" width="1.3" height="18.4" fill="#84dd8a"/><rect x="346.85" y="578.15" width="1.3" height="18.4" fill="#84dd8a"/><rect x="548.80" y="582.55" width="14.00" height="9.6" fill="#20c22b"/><rect x="548.15" y="578.15" width="1.3" height="18.4" fill="#84dd8a"/><rect x="562.15" y="578.15" width="1.3" height="18.4" fill="#84dd8a"/><rect x="598.30" y="582.55" width="8.40" height="9.6" fill="#20c22b"/><rect x="597.65" y="578.15" width="1.3" height="18.4" fill="#84dd8a"/><rect x="606.05" y="578.15" width="1.3" height="18.4" fill="#84dd8a"/><rect x="653.30" y="599.00" width="62.50" height="9.6" fill="#b4f4ee"/><rect x="652.65" y="594.60" width="1.3" height="18.4" fill="#d6f9f6"/><rect x="715.15" y="594.60" width="1.3" height="18.4" fill="#d6f9f6"/></g><rect x="281.4" y="126" width="2.3" height="480" fill="#760b0b"/><rect x="285.9" y="126" width="1.3" height="480" fill="#8a2424" opacity="0.9"/>
<rect x="82.0" y="52.7" width="1.5" height="29" fill="#1a1a1a"/><rect x="157.8" y="52.7" width="1.5" height="29" fill="#1a1a1a"/><rect x="233.9" y="52.7" width="1.5" height="29" fill="#1a1a1a"/><rect x="347.0" y="52.7" width="1.5" height="29" fill="#1a1a1a"/><rect x="459.8" y="52.7" width="1.5" height="29" fill="#1a1a1a"/><path d="M19.3,57.6 H33.3 M19.3,57.6 L29.2,67 L19.3,76.4 H33.3" fill="none" stroke="#111" stroke-width="2.2" stroke-linecap="round" stroke-linejoin="miter"/><path d="M55.2,58.7 Q55.2,56.2 57.7,56.2 H66.9 L72.2,61.5 V75.4 Q72.2,77.9 69.7,77.9 H57.7 Q55.2,77.9 55.2,75.4 Z" fill="none" stroke="#111" stroke-width="1.7" stroke-linejoin="round"/><path d="M66.7,56.2 V61.7 H72.2 Z" fill="#111"/><path d="M67.6,64 H59.7 L64.5,69.3 L59.7,74.6 H67.6" fill="none" stroke="#111" stroke-width="1.5" stroke-linecap="round"/><circle cx="98.85" cy="63.6" r="6.9" fill="none" stroke="#111" stroke-width="1.7"/><path d="M95.4,63.6 H102" stroke="#111" stroke-width="1.8"/><path d="M104,68.9 L112.5,77.3" stroke="#111" stroke-width="1.7" stroke-linecap="round"/><path d="M129.9,68.8 A9.75 9.75 0 1 0 132.7,60.0" fill="none" stroke="#111" stroke-width="1.9" stroke-linecap="round"/><path d="M130.1,57.2 V61.5 H134.5" fill="none" stroke="#111" stroke-width="1.7" stroke-linecap="round" stroke-linejoin="miter"/><path d="M139.3,61 V66.7 L143.6,71" fill="none" stroke="#111" stroke-width="1.7" stroke-linecap="round"/><path d="M167.2,57 H180.1 L173.6,64.3 Z" fill="none" stroke="#111" stroke-width="1.6" stroke-linejoin="round"/><path d="M173.6,64 V70.2" stroke="#111" stroke-width="1.9"/><circle cx="182.9" cy="71.9" r="5.6" fill="#f3f4f6" stroke="#111" stroke-width="1.3"/><path d="M182.3,69 Q182.2,72 185.2,74.3" fill="none" stroke="#111" stroke-width="1.2"/><path d="M208.5,57 H221.6 L215,64.5 Z" fill="none" stroke="#111" stroke-width="1.6" stroke-linejoin="round"/><path d="M215,64.3 V70.4" stroke="#111" stroke-width="1.9"/><rect x="209.2" y="73.4" width="11.7" height="4.8" rx="1.82" fill="#444"/><rect x="211.68" y="74.46" width="1.00" height="2.69" rx="0.45" fill="#ececec"/><rect x="213.59" y="74.46" width="1.00" height="2.69" rx="0.45" fill="#ececec"/><rect x="215.51" y="74.46" width="1.00" height="2.69" rx="0.45" fill="#ececec"/><rect x="217.43" y="74.46" width="1.00" height="2.69" rx="0.45" fill="#ececec"/><rect x="242.3" y="62.7" width="2.1" height="8.7" rx="1" fill="#111"/><rect x="262.5" y="62.7" width="2.1" height="8.7" rx="1" fill="#111"/><rect x="248" y="65" width="10.9" height="3.8" rx="1.44" fill="#222"/><rect x="250.06" y="65.84" width="1.00" height="2.13" rx="0.45" fill="#ececec"/><rect x="251.99" y="65.84" width="1.00" height="2.13" rx="0.45" fill="#ececec"/><rect x="253.91" y="65.84" width="1.00" height="2.13" rx="0.45" fill="#ececec"/><rect x="255.84" y="65.84" width="1.00" height="2.13" rx="0.45" fill="#ececec"/><g transform="translate(290.95,0) scale(1,1)"><rect x="-10.95" y="68" width="1.8" height="8.4" rx="0.8" fill="#555"/><rect x="9.15" y="68" width="1.8" height="8.4" rx="0.8" fill="#555"/><path d="M-6.75,72.2 L2.45,66.4 L2.45,77.9 Z" fill="#555"/><path d="M1.5,72.2 H6.6" stroke="#555" stroke-width="2" stroke-linecap="round"/></g><rect x="285" y="58.7" width="11.9" height="4.8" rx="1.82" fill="#666"/><rect x="287.49" y="59.76" width="1.02" height="2.69" rx="0.46" fill="#ececec"/><rect x="289.46" y="59.76" width="1.02" height="2.69" rx="0.46" fill="#ececec"/><rect x="291.42" y="59.76" width="1.02" height="2.69" rx="0.46" fill="#ececec"/><rect x="293.39" y="59.76" width="1.02" height="2.69" rx="0.46" fill="#ececec"/><g transform="translate(328.45,0) scale(-1,1)"><rect x="-10.95" y="68" width="1.8" height="8.4" rx="0.8" fill="#555"/><rect x="9.15" y="68" width="1.8" height="8.4" rx="0.8" fill="#555"/><path d="M-6.75,72.2 L2.45,66.4 L2.45,77.9 Z" fill="#555"/><path d="M1.5,72.2 H6.6" stroke="#555" stroke-width="2" stroke-linecap="round"/></g><rect x="322.5" y="58.7" width="11.9" height="4.8" rx="1.82" fill="#666"/><rect x="324.99" y="59.76" width="1.02" height="2.69" rx="0.46" fill="#ececec"/><rect x="326.96" y="59.76" width="1.02" height="2.69" rx="0.46" fill="#ececec"/><rect x="328.92" y="59.76" width="1.02" height="2.69" rx="0.46" fill="#ececec"/><rect x="330.89" y="59.76" width="1.02" height="2.69" rx="0.46" fill="#ececec"/><rect x="355.6" y="63" width="1.7" height="8.2" rx="0.8" fill="#111"/><rect x="376" y="63" width="1.9" height="8.2" rx="0.8" fill="#111"/><circle cx="366.9" cy="67" r="6.3" fill="none" stroke="#111" stroke-width="1.3"/><path d="M366.7,63.6 V67 L369.6,69.4" fill="none" stroke="#111" stroke-width="1.3"/><g transform="translate(404.1,0) scale(1,1)"><rect x="-10.95" y="68" width="1.8" height="8.4" rx="0.8" fill="#555"/><rect x="9.15" y="68" width="1.8" height="8.4" rx="0.8" fill="#555"/><path d="M-6.75,72.2 L2.45,66.4 L2.45,77.9 Z" fill="#555"/><path d="M1.5,72.2 H6.6" stroke="#555" stroke-width="2" stroke-linecap="round"/></g><circle cx="404.20000000000005" cy="60" r="4.5" fill="none" stroke="#666" stroke-width="1.1"/><path d="M404.00000000000006,57.8 Q404.00000000000006,60.2 405.80000000000007,61.7" fill="none" stroke="#666" stroke-width="1"/><g transform="translate(441.5,0) scale(-1,1)"><rect x="-10.95" y="68" width="1.8" height="8.4" rx="0.8" fill="#555"/><rect x="9.15" y="68" width="1.8" height="8.4" rx="0.8" fill="#555"/><path d="M-6.75,72.2 L2.45,66.4 L2.45,77.9 Z" fill="#555"/><path d="M1.5,72.2 H6.6" stroke="#555" stroke-width="2" stroke-linecap="round"/></g><circle cx="441.4" cy="60" r="4.5" fill="none" stroke="#666" stroke-width="1.1"/><path d="M441.2,57.8 Q441.2,60.2 443.0,61.7" fill="none" stroke="#666" stroke-width="1"/><rect x="469.8" y="57.8" width="20.2" height="15.7" rx="2" fill="none" stroke="#111" stroke-width="1.8"/><rect x="476.2" y="74.4" width="7.1" height="2.7" fill="#111"/><path d="M472.6,63.6 V60.6 H475.6 M487.8,67.7 V70.8 H484.6" fill="none" stroke="#222" stroke-width="1"/><rect x="506.3" y="56.2" width="21.6" height="5.6" rx="2" fill="none" stroke="#111" stroke-width="1.8"/><path d="M507.8,61.8 V76.2 Q507.8,78 509.6,78 H524.9 Q526.8,78 526.8,76.2 V61.8" fill="none" stroke="#111" stroke-width="1.8"/><rect x="513.6" y="71.8" width="11.1" height="4" rx="1.52" fill="#555"/><rect x="515.74" y="72.68" width="1.01" height="2.24" rx="0.45" fill="#ececec"/><rect x="517.68" y="72.68" width="1.01" height="2.24" rx="0.45" fill="#ececec"/><rect x="519.61" y="72.68" width="1.01" height="2.24" rx="0.45" fill="#ececec"/><rect x="521.55" y="72.68" width="1.01" height="2.24" rx="0.45" fill="#ececec"/><path d="M552.77,58.79 L553.83,55.96 L556.17,55.96 L557.23,58.79 L561.08,61.02 L564.06,60.52 L565.23,62.54 L563.31,64.87 L563.31,69.33 L565.23,71.66 L564.06,73.68 L561.08,73.18 L557.23,75.41 L556.17,78.24 L553.83,78.24 L552.77,75.41 L548.92,73.18 L545.94,73.68 L544.77,71.66 L546.69,69.33 L546.69,64.87 L544.77,62.54 L545.94,60.52 L548.92,61.02 Z" fill="none" stroke="#111" stroke-width="2.1" stroke-linejoin="round"/><circle cx="555" cy="67.1" r="4.3" fill="#111"/><path d="M584.6,69.6 A8.2 8.2 0 0 1 594.8,59.2" fill="none" stroke="#333" stroke-width="1.4" stroke-linecap="round"/><path d="M592.8,56.6 L595.5,59.4 L592.4,62.2" fill="none" stroke="#333" stroke-width="1.4" stroke-linecap="round" stroke-linejoin="round"/><path d="M600.2,64.4 A8.2 8.2 0 0 1 590,74.8" fill="none" stroke="#333" stroke-width="1.4" stroke-linecap="round"/><path d="M591.8,77.4 L589.1,74.6 L592.2,71.8" fill="none" stroke="#333" stroke-width="1.4" stroke-linecap="round" stroke-linejoin="round"/>
<rect x="0" y="97" width="1.2" height="6" fill="#a8a8a8"/><rect x="0" y="124.3" width="3.3" height="1.2" fill="#555"/><rect x="0" y="98" width="3.3" height="26.3" fill="#d8d8d8" opacity="0.35"/><rect x="0" y="133.90" width="1.8" height="1.1" fill="#555"/><rect x="0" y="153.55" width="1.8" height="1.1" fill="#555"/><rect x="0" y="173.20" width="1.8" height="1.1" fill="#555"/><rect x="0" y="192.85" width="1.8" height="1.1" fill="#555"/><rect x="0" y="212.50" width="1.8" height="1.1" fill="#555"/><rect x="0" y="232.15" width="1.8" height="1.1" fill="#555"/><rect x="0" y="251.80" width="1.8" height="1.1" fill="#555"/><rect x="0" y="271.45" width="1.8" height="1.1" fill="#555"/><rect x="0" y="291.10" width="1.8" height="1.1" fill="#555"/><rect x="0" y="310.75" width="1.8" height="1.1" fill="#555"/><rect x="0" y="330.40" width="1.8" height="1.1" fill="#555"/><rect x="0" y="350.05" width="1.8" height="1.1" fill="#555"/><rect x="0" y="369.70" width="1.8" height="1.1" fill="#555"/><rect x="0" y="389.35" width="1.8" height="1.1" fill="#555"/><rect x="0" y="409.00" width="1.8" height="1.1" fill="#555"/><rect x="0" y="428.65" width="1.8" height="1.1" fill="#555"/><rect x="0" y="448.30" width="1.8" height="1.1" fill="#555"/><rect x="0" y="467.95" width="1.8" height="1.1" fill="#555"/><rect x="0" y="487.60" width="1.8" height="1.1" fill="#555"/><rect x="0" y="507.25" width="1.8" height="1.1" fill="#555"/><rect x="0" y="526.90" width="1.8" height="1.1" fill="#555"/><rect x="0" y="546.55" width="1.8" height="1.1" fill="#555"/><rect x="0" y="566.20" width="1.8" height="1.1" fill="#555"/><rect x="0" y="585.85" width="1.8" height="1.1" fill="#555"/><rect x="0" y="205" width="2.7" height="12.2" fill="#84d81c"/><rect x="0" y="483.30" width="2.7" height="9.6" fill="#17e443"/><text x="-3" y="94" font-size="11.5" fill="#555" font-family="Liberation Sans">-</text><text x="-4.5" y="120.5" font-size="9" fill="#222" font-family="Liberation Sans">0</text>
<circle cx="276.7" cy="384.1" r="4.2" fill="#f2f2f2" stroke="#505050" stroke-width="1.1"/>
<circle cx="253.4" cy="111.8" r="8.4" fill="none" stroke="#444" stroke-width="1.4"/>
<rect x="252.7" y="110" width="1.5" height="6" fill="#444"/>
<circle cx="253.45" cy="107.6" r="0.95" fill="#444"/>
</svg>
<div class="rt" style="left:380.00px">00:09:00</div><div class="rt" style="left:488.78px">00:09:30</div><div class="rt" style="left:597.56px">00:10:00</div><div class="rt" style="left:706.34px">00:10:30</div><div class="rt" style="left:815.12px">00:11:00</div>
<div class="abs" style="left:642.5px;top:83.9px;font-size:11.5px;line-height:12px;color:#3a3a3a;white-space:nowrap">- Zoomed in! -</div>
</body></html>
